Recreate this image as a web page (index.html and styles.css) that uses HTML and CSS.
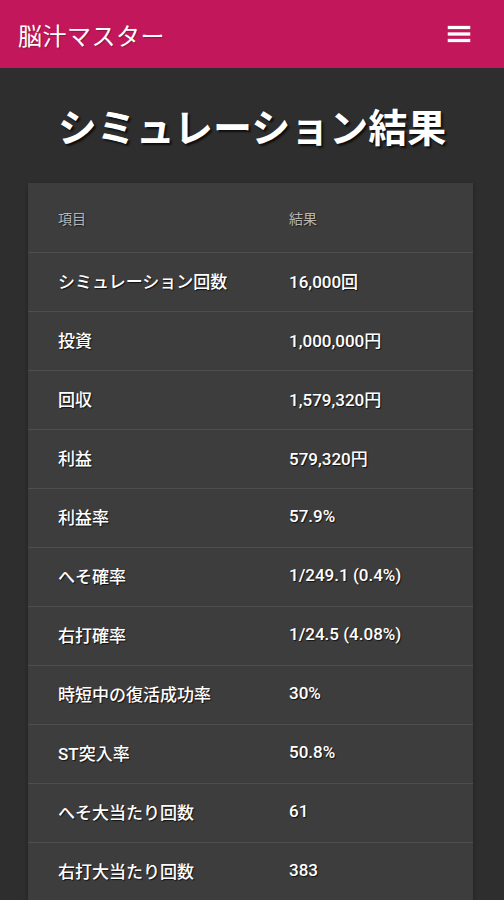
FILE: index.html
```html
<!DOCTYPE html>
<html lang="ja">
<head>
    <meta charset="UTF-8">
    <meta name="viewport" content="width=device-width, initial-scale=1.0">
    <title>脳汁マスター</title>
    <link rel="stylesheet" href="styles.css">
</head>
<body>
    <header class="appBar">
        <div class="brand">脳汁マスター</div>
        <button class="menuBtn" aria-label="menu">
            <svg width="24" height="24" viewBox="0 0 24 24">
                <rect x="3" y="5.5" width="18" height="2.6" fill="#fff"/>
                <rect x="3" y="10.7" width="18" height="2.6" fill="#fff"/>
                <rect x="3" y="15.9" width="18" height="2.6" fill="#fff"/>
            </svg>
        </button>
    </header>

    <h1 class="pageTitle">シミュレーション結果</h1>

    <div class="resultBox">
        <table class="resultTable">
            <thead>
                <tr><th>項目</th><th>結果</th></tr>
            </thead>
            <tbody>
                <tr><td>シミュレーション回数</td><td>16,000回</td></tr>
                <tr><td>投資</td><td>1,000,000円</td></tr>
                <tr><td>回収</td><td>1,579,320円</td></tr>
                <tr><td>利益</td><td>579,320円</td></tr>
                <tr><td>利益率</td><td>57.9%</td></tr>
                <tr><td>へそ確率</td><td>1/249.1 (0.4%)</td></tr>
                <tr><td>右打確率</td><td>1/24.5 (4.08%)</td></tr>
                <tr><td>時短中の復活成功率</td><td>30%</td></tr>
                <tr><td>ST突入率</td><td>50.8%</td></tr>
                <tr><td>へそ大当たり回数</td><td>61</td></tr>
                <tr><td>右打大当たり回数</td><td>383</td></tr>
            </tbody>
        </table>
    </div>
</body>
</html>
```

FILE: styles.css
```css
body {
    font-family: Roboto, "Noto Sans CJK JP", sans-serif;
    margin: 0;
    background-color: #2e2e2e;
    color: #fff;
}
.appBar {
    height: 68px;
    background-color: #c2185b;
    display: flex;
    align-items: center;
    justify-content: space-between;
    padding: 0 29px 0 18px;
}
.brand {
    font-size: 24px;
    letter-spacing: 0.5px;
    text-shadow: 1px 1px 1px rgba(0, 0, 0, 0.25);
}
.menuBtn {
    background: none;
    border: none;
    padding: 0;
    width: 36px;
    height: 36px;
    display: flex;
    align-items: center;
    justify-content: center;
    margin-right: -2px;
}
.menuBtn svg {
    width: 30px;
    height: 30px;
}
.pageTitle {
    font-size: 39px;
    font-weight: 700;
    text-align: center;
    line-height: 47px;
    margin: 38px 0 30px;
    text-shadow: 2px 2px 2px rgba(0, 0, 0, 0.7);
}
.resultBox {
    width: 445px;
    margin-left: 28px;
    background-color: #3d3d3d;
    box-shadow: 0 2px 4px rgba(0, 0, 0, 0.3);
}
.resultTable {
    width: 100%;
    border-collapse: collapse;
}
.resultTable th,
.resultTable td {
    text-align: left;
    padding: 0 0 0 30px;
    border-bottom: 1px solid #4e4e4e;
}
.resultTable th:first-child,
.resultTable td:first-child {
    width: 231px;
}
.resultTable th:last-child,
.resultTable td:last-child {
    padding-left: 0;
}
.resultTable th {
    height: 69px;
    font-size: 14px;
    font-weight: 400;
    color: #b5b5b5;
    text-shadow: 1px 1px 1px rgba(0, 0, 0, 0.5);
}
.resultTable td {
    height: 54px;
    padding-bottom: 4px;
    font-size: 17px;
    font-weight: 500;
    text-shadow: 1px 1px 1px rgba(0, 0, 0, 0.7);
}
```
